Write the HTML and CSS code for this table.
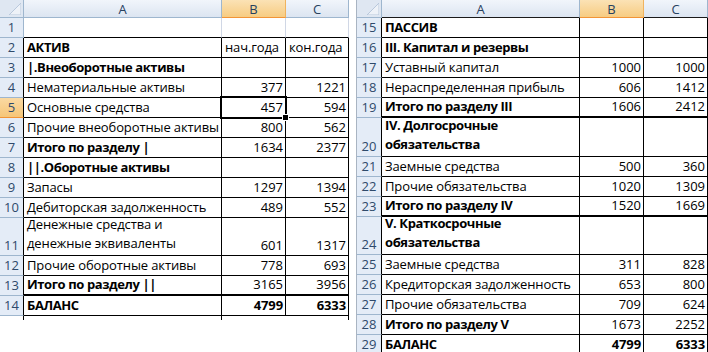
FILE: index.html
```html
<!DOCTYPE html>
<html lang="ru">
<head>
<meta charset="utf-8">
<title>Баланс</title>
<link rel="stylesheet" href="styles.css">
</head>
<body>
<div class="screen">
  <div class="sheet sheet-left">
    <div class="corner"><svg width="12" height="12" viewBox="0 0 12 12"><polygon points="12,0 12,12 0,12" fill="#eef2f8" stroke="#b9c8dc" stroke-width="1"/></svg></div>
    <div class="ch">A</div>
    <div class="ch ch-sel">B</div>
    <div class="ch">C</div>

    <div class="rh">1</div><div class="c c-top"></div><div class="c c-top"></div><div class="c c-top c-last"></div>

    <div class="rh rh-b">2</div><div class="c b bold">АКТИВ</div><div class="c b">нач.года</div><div class="c b">кон.года</div>
    <div class="rh rh-b">3</div><div class="c b bold">|.Внеоборотные активы</div><div class="c b"></div><div class="c b"></div>
    <div class="rh rh-b">4</div><div class="c b">Нематериальные активы</div><div class="c b n">377</div><div class="c b n">1221</div>
    <div class="rh rh-b rh-sel">5</div><div class="c b">Основные средства</div><div class="c b n sel">457</div><div class="c b n">594</div>
    <div class="rh rh-b">6</div><div class="c b">Прочие внеоборотные активы</div><div class="c b n">800</div><div class="c b n">562</div>
    <div class="rh rh-b">7</div><div class="c b bold">Итого по разделу |</div><div class="c b n">1634</div><div class="c b n">2377</div>
    <div class="rh rh-b">8</div><div class="c b bold">||.Оборотные активы</div><div class="c b"></div><div class="c b"></div>
    <div class="rh rh-b">9</div><div class="c b">Запасы</div><div class="c b n">1297</div><div class="c b n">1394</div>
    <div class="rh rh-b">10</div><div class="c b">Дебиторская задолженность</div><div class="c b n">489</div><div class="c b n">552</div>
    <div class="rh rh-b">11</div><div class="c b wrap">Денежные средства и<br>денежные эквиваленты</div><div class="c b n">601</div><div class="c b n">1317</div>
    <div class="rh rh-b">12</div><div class="c b">Прочие оборотные активы</div><div class="c b n">778</div><div class="c b n">693</div>
    <div class="rh rh-b">13</div><div class="c b bold thick">Итого по разделу ||</div><div class="c b n thick">3165</div><div class="c b n thick">3956</div>
    <div class="rh rh-b">14</div><div class="c b bold">БАЛАНС</div><div class="c b n bold">4799</div><div class="c b n bold">6333</div>

    <div class="stub stub-line"></div><div class="stub stub-line"></div><div class="stub"></div><div class="stub stub-line"></div>
  </div>

  <div class="sheet sheet-right">
    <div class="corner"><svg width="12" height="12" viewBox="0 0 12 12"><polygon points="12,0 12,12 0,12" fill="#eef2f8" stroke="#b9c8dc" stroke-width="1"/></svg></div>
    <div class="ch ch-dark">A</div>
    <div class="ch ch-sel ch-dark">B</div>
    <div class="ch ch-dark">C</div>

    <div class="rh rh-b">15</div><div class="c b bold">ПАССИВ</div><div class="c b"></div><div class="c b"></div>
    <div class="rh rh-b">16</div><div class="c b bold">III. Капитал и резервы</div><div class="c b"></div><div class="c b"></div>
    <div class="rh rh-b">17</div><div class="c b">Уставный капитал</div><div class="c b n">1000</div><div class="c b n">1000</div>
    <div class="rh rh-b">18</div><div class="c b">Нераспределенная прибыль</div><div class="c b n">606</div><div class="c b n">1412</div>
    <div class="rh rh-b">19</div><div class="c b bold thick">Итого по разделу III</div><div class="c b n thick">1606</div><div class="c b n thick">2412</div>
    <div class="rh rh-b">20</div><div class="c b bold wrap">IV. Долгосрочные<br>обязательства</div><div class="c b"></div><div class="c b"></div>
    <div class="rh rh-b">21</div><div class="c b">Заемные средства</div><div class="c b n">500</div><div class="c b n">360</div>
    <div class="rh rh-b">22</div><div class="c b">Прочие обязательства</div><div class="c b n">1020</div><div class="c b n">1309</div>
    <div class="rh rh-b">23</div><div class="c b bold thick">Итого по разделу IV</div><div class="c b n thick">1520</div><div class="c b n thick">1669</div>
    <div class="rh rh-b">24</div><div class="c b bold wrap">V. Краткосрочные<br>обязательства</div><div class="c b"></div><div class="c b"></div>
    <div class="rh rh-b">25</div><div class="c b">Заемные средства</div><div class="c b n">311</div><div class="c b n">828</div>
    <div class="rh rh-b">26</div><div class="c b">Кредиторская задолженность</div><div class="c b n">653</div><div class="c b n">800</div>
    <div class="rh rh-b">27</div><div class="c b">Прочие обязательства</div><div class="c b n">709</div><div class="c b n">624</div>
    <div class="rh rh-b">28</div><div class="c b bold">Итого по разделу V</div><div class="c b n">1673</div><div class="c b n">2252</div>
    <div class="rh rh-b">29</div><div class="c b bold">БАЛАНС</div><div class="c b n bold">4799</div><div class="c b n bold">6333</div>
  </div>
</div>
</body>
</html>
```
FILE: styles.css
```css
html, body {
  margin: 0;
  padding: 0;
  background: #ffffff;
  overflow: hidden;
}

.screen {
  width: 708px;
  height: 352px;
  display: flex;
  align-items: flex-start;
  gap: 7px;
  overflow: hidden;
  font-family: "Open Sans", "Liberation Sans", sans-serif;
  font-size: 13px;
  color: #000;
}

.sheet {
  display: grid;
  background: #fff;
}

.sheet-left {
  grid-template-columns: 24px 198px 64px 63px;
  grid-template-rows: 18px repeat(10, 20px) 38px repeat(3, 20px) 4px;
}

.sheet-right {
  border-left: 1px solid #a9b4c2;
  grid-template-columns: 25px 198px 64px 64px;
  grid-template-rows: 18px repeat(5, 20px) 39px repeat(3, 20px) 38px repeat(5, 20px);
}

.corner {
  background: #dfe7f2;
  border-right: 1px solid #9eb6ce;
  border-bottom: 1px solid #9eb6ce;
  box-sizing: border-box;
  display: flex;
  align-items: flex-end;
  justify-content: flex-end;
  padding: 0 2px 2px 0;
}
.corner svg { display: block; }

.ch {
  box-sizing: border-box;
  background: linear-gradient(#f1f5fb, #dce5f1);
  border-right: 1px solid #9eb6ce;
  border-bottom: 1px solid #9eb6ce;
  display: flex;
  align-items: center;
  justify-content: center;
  color: #27415f;
  line-height: 16px;
}
.ch-dark { border-bottom-color: #1a1a1a; }
.ch-sel {
  background: linear-gradient(#fbe2b5, #f7cc82);
  border-right-color: #f0b35e;
  border-bottom-color: #f29436;
}

.rh {
  box-sizing: border-box;
  background: #e4ecf7;
  border-right: 1px solid #9eb6ce;
  border-bottom: 1px solid #9eb6ce;
  display: flex;
  align-items: flex-end;
  justify-content: center;
  padding-bottom: 2px;
  line-height: 16px;
  color: #2f4a6b;
}
.rh-b { border-right-color: #000; }
.rh-sel {
  background: linear-gradient(#fad9a2, #f6c678);
  border-bottom-color: #f29436;
}

.c {
  box-sizing: border-box;
  border-right: 1px solid #d0d7e5;
  border-bottom: 1px solid #d0d7e5;
  display: flex;
  align-items: flex-end;
  padding: 0 2px 2px 3px;
  line-height: 16px;
  letter-spacing: -0.12px;
  white-space: nowrap;
  overflow: visible;
}
.c-top { border-bottom-color: #000; }
.b {
  border-right-color: #000;
  border-bottom-color: #000;
}
.n { justify-content: flex-end; letter-spacing: 0; }
.bold { font-weight: 700; letter-spacing: -0.4px; }
.n.bold { letter-spacing: -0.1px; }
.wrap { line-height: 19px; }
.thick { border-bottom-width: 2px; }

.sel { position: relative; }
.sel::after {
  content: "";
  position: absolute;
  left: -2px;
  top: -2px;
  right: -2px;
  bottom: -2px;
  border: 2px solid #000;
  box-shadow: inset 0 0 0 1px #fff;
}
.sel::before {
  content: "";
  position: absolute;
  right: -4px;
  bottom: -4px;
  width: 5px;
  height: 5px;
  background: #000;
  border: 1px solid #fff;
  z-index: 1;
}

.stub { background: #fff; box-sizing: border-box; }
.stub-line { border-right: 1px solid #000; }
```
